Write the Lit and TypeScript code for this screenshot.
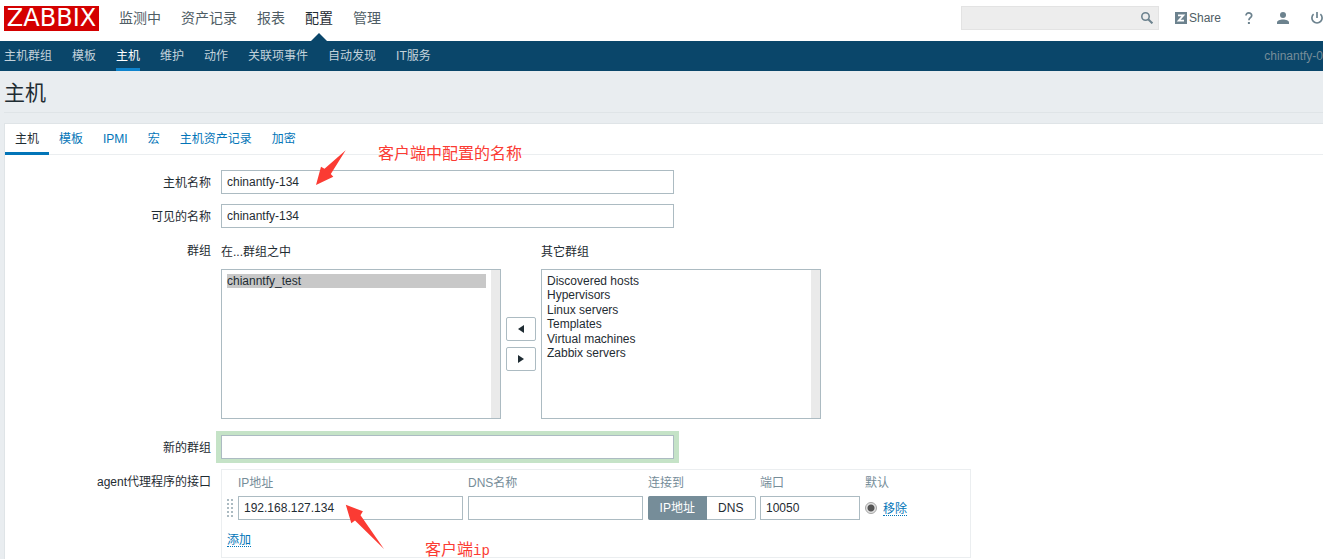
import { LitElement, html, css, svg } from "lit";
import { customElement, state } from "lit/decorators.js";

@customElement("app-root")
export class AppRoot extends LitElement {
  @state() private mainNav = ["监测中", "资产记录", "报表", "配置", "管理"];
  @state() private subNav = ["主机群组", "模板", "主机", "维护", "动作", "关联项事件", "自动发现", "IT服务"];
  @state() private tabs = ["主机", "模板", "IPMI", "宏", "主机资产记录", "加密"];
  @state() private otherGroups = [
    "Discovered hosts",
    "Hypervisors",
    "Linux servers",
    "Templates",
    "Virtual machines",
    "Zabbix servers",
  ];

  static styles = css`
    :host {
      display: flex;
      flex-direction: column;
      position: relative;
      min-height: 100vh;
      overflow: hidden;
      background: #e9edf0;
      color: #1f2c33;
      font: 12px/24px "Liberation Sans", Arial, "Noto Sans CJK SC", sans-serif;
    }
    *, *::before, *::after { box-sizing: border-box; }
    a { color: #0275b8; text-decoration: none; }
    button, input, select { font: inherit; color: inherit; margin: 0; }
    h1 { margin: 0; font-size: 21px; font-weight: 400; line-height: 41px; border-bottom: 1px solid #dfe4e7; }

    .top { display: flex; align-items: center; height: 41px; padding: 0 0 0 4px; background: #fff; }
    .logo {
      width: 95px; height: 25px; margin-bottom: 4px;
      background: #d40000; color: #fff; text-align: center;
      font: 24px/25px "DejaVu Sans", sans-serif;
    }
    .main-nav { display: flex; gap: 20px; margin-left: 20px; height: 41px; font-size: 14px; line-height: 36px; }
    .main-nav a { position: relative; color: #4f5d65; }
    .main-nav .on { color: #1f2c33; }
    .main-nav .on::after {
      content: ""; position: absolute; left: 50%; bottom: 0; margin-left: -8px;
      border: 8px solid transparent; border-top: 0; border-bottom-color: #0a466a;
    }
    .tools { display: flex; align-items: center; gap: 22px; margin-left: auto; height: 36px; margin-bottom: 5px; color: #768d99; }
    .search { display: flex; align-items: center; width: 198px; height: 24px; margin-right: -6px; background: #ededed; border: 1px solid #e3e3e3; }
    .search input { flex: 1; min-width: 0; height: 22px; padding: 0 5px; border: 0; background: none; outline: 0; }
    .icon { display: flex; align-items: center; justify-content: center; width: 12px; height: 24px; padding: 0; border: 0; background: none; color: #6c828e; }
    .search .icon { margin-right: 5px; }
    .icon svg { flex: none; }
    .share { display: flex; align-items: center; gap: 2px; color: #4f5d65; }

    .sub { display: flex; justify-content: space-between; height: 30px; padding-left: 4px; background: #0a466a; line-height: 30px; }
    .sub nav { display: flex; gap: 20px; }
    .sub a { color: #c3d2db; }
    .sub .on { color: #fff; border-bottom: 3px solid #0f84cd; }
    .server { color: #768d99; }

    .title { padding: 0 0 10px 4px; }
    .title h1 { line-height: 42px; height: 42px; padding-top: 1px; }
    .card { flex: 1; margin-left: 4px; background: #fff; border: 1px solid #dfe4e7; border-width: 1px 0 0 1px; }
    .tabs { display: flex; height: 31px; border-bottom: 1px solid #ebeef0; line-height: 30px; }
    .tabs a { height: 31px; padding: 0 10px; }
    .tabs .on { color: #1f2c33; border-bottom: 3px solid #0275b8; }

    form { display: flex; flex-direction: column; gap: 10px; padding-top: 15px; }
    .row { display: grid; grid-template-columns: 206px minmax(0, 1fr); column-gap: 10px; align-items: start; }
    .label { text-align: right; height: 24px; line-height: 26px; }
    .text { display: block; width: 100%; height: 24px; padding: 0 5px; border: 1px solid #acbbc2; background: #fff; outline: 0; border-radius: 0; }
    .wide { max-width: 453px; }
    .focus { box-shadow: -1px 0 0 4px #c5e3c7, 1px 0 0 4px #c5e3c7; }

    .groups { display: grid; grid-template-columns: 280px 30px 280px; column-gap: 5px; row-gap: 5px; padding-bottom: 6px; }
    .groups label { height: 26px; line-height: 28px; }
    .groups .other { grid-column: 3; }
    .list {
      width: 100%; height: 150px; padding: 4px 14px 4px 5px; border: 1px solid #acbbc2; border-radius: 0;
      background: linear-gradient(#eaeaea, #eaeaea) right / 9px 100% no-repeat #fff;
      overflow: hidden; outline: 0; line-height: normal;
    }
    .list option { padding: 0; }
    .list option:checked { background: linear-gradient(#c8c8c8, #c8c8c8); color: #1f2c33; }
    .move { display: flex; flex-direction: column; justify-content: center; gap: 6px; }
    .move button { display: flex; align-items: center; justify-content: center; height: 24px; padding: 0; background: #fff; border: 1px solid #acbbc2; border-radius: 2px; }

    .box { max-width: 750px; padding: 0 5px 6px; border: 1px solid #ebeef0; }
    table { border-collapse: collapse; table-layout: fixed; width: 686px; }
    th { padding: 1px 0; font-weight: 400; text-align: left; color: #768d99; }
    td { padding: 0 5px 7px 0; }
    .c-drag { width: 11px; } .c-ip { width: 230px; } .c-dns { width: 180px; }
    .c-type { width: 112px; } .c-port { width: 105px; } .c-def { width: 48px; }
    .drag { display: block; }
    td.type { padding-right: 4px; }
    td.def { padding-right: 0; }
    .seg { display: flex; height: 24px; line-height: 22px; border: 1px solid #acbbc2; border-radius: 2px; }
    .seg label { flex: 1 0 auto; padding: 0 11px; text-align: center; }
    .seg label:has(:checked) { margin: -1px 0 -1px -1px; padding: 1px 11px; background: #768d99; color: #fff; border-radius: 2px 0 0 2px; }
    .seg input { position: absolute; opacity: 0; pointer-events: none; }
    .default { display: flex; align-items: center; gap: 6px; }
    .radio { appearance: none; width: 12px; height: 12px; border: 1px solid #a5a5a5; border-radius: 50%; background: radial-gradient(circle, #555 0 3px, #e2e2e2 4px); }
    .link { padding: 2px 0 0; border: 0; background: none; color: #0275b8; line-height: 12px; border-bottom: 1px dotted #0275b8; cursor: pointer; }
    .add { display: flex; align-items: center; height: 24px; }

    .note { position: absolute; color: #fb3b33; font-size: 16px; line-height: 20px; white-space: nowrap; }
    .note span { font: 14px/20px "Liberation Mono", monospace; }
    .note-name { left: 378px; top: 144px; }
    .note-ip { left: 425px; top: 540px; }
    .arrow { position: absolute; fill: #fb3b33; pointer-events: none; }
    .arrow-name { left: 316px; top: 150px; }
    .arrow-ip { left: 345px; top: 504px; }
  `;

  private links(items: string[], active: string) {
    return items.map((t) => html`<a href="#" class=${t === active ? "on" : ""}>${t}</a>`);
  }

  private dots() {
    const out = [];
    for (let y = 0; y < 5; y++) {
      for (let x = 0; x < 2; x++) out.push(svg`<rect x=${x * 4} y=${y * 4} width="2" height="2" />`);
    }
    return out;
  }

  render() {
    return html`
      <header class="top">
        <a class="logo" href="#">ZABBIX</a>
        <nav class="main-nav">${this.links(this.mainNav, "配置")}</nav>
        <div class="tools">
          <div class="search">
            <input type="text" aria-label="搜索" />
            <button class="icon" aria-label="搜索">
              <svg width="12" height="12" viewBox="0 0 12 12" fill="none" stroke="currentColor">
                <circle cx="4.5" cy="4.5" r="3.7" stroke-width="1.6" />
                <path d="M7.2 7.2 11.4 11.4" stroke-width="2" />
              </svg>
            </button>
          </div>
          <a class="share" href="#">
            <svg width="12" height="12" viewBox="0 0 12 12">
              <path fill="#6c828e" d="M0 0h12v12H0z" />
              <path fill="none" stroke="#fff" stroke-width="1.7" d="M3 3.3h5.4L3.6 8.7H9" />
            </svg>
            Share
          </a>
          <button class="icon" aria-label="帮助">
            <svg width="8" height="12" viewBox="0 0 8 12">
              <path d="M1 3.600C1 1.800 2.200.9 3.800.9s2.900 1 2.900 2.500C6.700 5.600 3.900 5.700 3.900 8.200" fill="none" stroke="currentColor" stroke-width="1.700" />
              <path d="M2.900 10h2v2h-2z" fill="currentColor" />
            </svg>
          </button>
          <button class="icon" aria-label="用户">
            <svg width="12" height="12" viewBox="0 0 12 12" fill="currentColor">
              <circle cx="6" cy="3" r="3" />
              <path d="M0 12V10.500C0 8.500 3 7.500 6 7.500s6 1 6 3V12z" />
            </svg>
          </button>
          <button class="icon" aria-label="退出">
            <svg width="12" height="12" viewBox="0 0 12 12" fill="none" stroke="currentColor" stroke-width="1.700">
              <path d="M2.600 2.100A5.100 5.100 0 1 0 9.400 2.100M6 0V6" />
            </svg>
          </button>
        </div>
      </header>
      <div class="sub">
        <nav>${this.links(this.subNav, "主机")}</nav>
        <span class="server">chinantfy-0</span>
      </div>
      <div class="title"><h1>主机</h1></div>
      <main class="card">
        <nav class="tabs">${this.links(this.tabs, "主机")}</nav>
        <form @submit=${(e: Event) => e.preventDefault()}>
          <div class="row">
            <label class="label" for="host">主机名称</label>
            <input class="text wide" id="host" type="text" value="chinantfy-134" />
          </div>
          <div class="row">
            <label class="label" for="visible">可见的名称</label>
            <input class="text wide" id="visible" type="text" value="chinantfy-134" />
          </div>
          <div class="row">
            <span class="label">群组</span>
            <div class="groups">
              <label for="in">在...群组之中</label>
              <label class="other" for="other">其它群组</label>
              <select class="list" id="in" multiple size="10">
                <option selected>chianntfy_test</option>
              </select>
              <div class="move">
                <button type="button" aria-label="添加群组">
                  <svg width="6" height="8" viewBox="0 0 6 8"><path fill="#1f2c33" d="M6 0v8L0 4z" /></svg>
                </button>
                <button type="button" aria-label="移除群组">
                  <svg width="6" height="8" viewBox="0 0 6 8"><path fill="#1f2c33" d="M0 0v8l6-4z" /></svg>
                </button>
              </div>
              <select class="list" id="other" multiple size="10">
                ${this.otherGroups.map((g) => html`<option>${g}</option>`)}
              </select>
            </div>
          </div>
          <div class="row">
            <label class="label" for="newgroup">新的群组</label>
            <input class="text wide focus" id="newgroup" type="text" />
          </div>
          <div class="row">
            <span class="label">agent代理程序的接口</span>
            <div class="box">
              <table>
                <thead>
                  <tr>
                    <th class="c-drag"></th>
                    <th class="c-ip">IP地址</th>
                    <th class="c-dns">DNS名称</th>
                    <th class="c-type">连接到</th>
                    <th class="c-port">端口</th>
                    <th class="c-def">默认</th>
                  </tr>
                </thead>
                <tbody>
                  <tr>
                    <td><svg class="drag" width="6" height="18" viewBox="0 0 6 18" fill="#acbbc2">${this.dots()}</svg></td>
                    <td><input class="text" type="text" aria-label="IP地址" value="192.168.127.134" /></td>
                    <td><input class="text" type="text" aria-label="DNS名称" /></td>
                    <td class="type">
                      <div class="seg">
                        <label><input type="radio" name="useip" checked />IP地址</label>
                        <label><input type="radio" name="useip" />DNS</label>
                      </div>
                    </td>
                    <td><input class="text" type="text" aria-label="端口" value="10050" /></td>
                    <td class="def">
                      <div class="default">
                        <input class="radio" type="radio" name="main" aria-label="默认" checked />
                        <button class="link" type="button">移除</button>
                      </div>
                    </td>
                  </tr>
                </tbody>
              </table>
              <div class="add"><button class="link" type="button">添加</button></div>
            </div>
          </div>
        </form>
      </main>
      <div class="note note-name">客户端中配置的名称</div>
      <svg class="arrow arrow-name" width="30" height="35" viewBox="0 0 30 35">
        <path d="M0 35 5 16.700l3.500 2L29.700.3 14.800 24l2.500 2.700z" />
      </svg>
      <div class="note note-ip">客户端<span>ip</span></div>
      <svg class="arrow arrow-ip" width="40" height="45" viewBox="0 0 40 45">
        <path d="M.8.8 17.900 7.300l-2.400 4L39 45 10 16.500 6.300 19.300z" />
      </svg>
    `;
  }
}
